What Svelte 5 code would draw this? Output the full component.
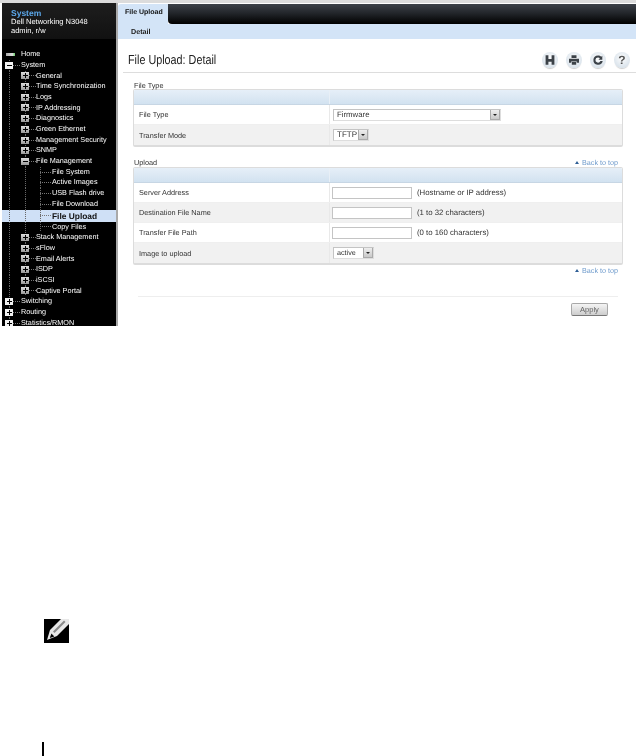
<script>
  // guides = how many ancestor lines run through the row
  const tree = [
    { label: "System", guides: [], kind: "open" },
    { label: "General", guides: [1], kind: "closed" },
    { label: "Time Synchronization", guides: [1], kind: "closed" },
    { label: "Logs", guides: [1], kind: "closed" },
    { label: "IP Addressing", guides: [1], kind: "closed" },
    { label: "Diagnostics", guides: [1], kind: "closed" },
    { label: "Green Ethernet", guides: [1], kind: "closed" },
    { label: "Management Security", guides: [1], kind: "closed" },
    { label: "SNMP", guides: [1], kind: "closed" },
    { label: "File Management", guides: [1], kind: "open" },
    { label: "File System", guides: [1, 1], kind: "leaf" },
    { label: "Active Images", guides: [1, 1], kind: "leaf" },
    { label: "USB Flash drive", guides: [1, 1], kind: "leaf" },
    { label: "File Download", guides: [1, 1], kind: "leaf" },
    { label: "File Upload", guides: [1, 1], kind: "leaf", active: true },
    { label: "Copy Files", guides: [1, 1], kind: "leaf" },
    { label: "Stack Management", guides: [1], kind: "closed" },
    { label: "sFlow", guides: [1], kind: "closed" },
    { label: "Email Alerts", guides: [1], kind: "closed" },
    { label: "ISDP", guides: [1], kind: "closed" },
    { label: "iSCSI", guides: [1], kind: "closed" },
    { label: "Captive Portal", guides: [1], kind: "closed" },
    { label: "Switching", guides: [], kind: "closed" },
    { label: "Routing", guides: [], kind: "closed" },
    { label: "Statistics/RMON", guides: [], kind: "closed" }
  ];

  const uploadRows = [
    { label: "Server Address", hint: "(Hostname or IP address)" },
    { label: "Destination File Name", hint: "(1 to 32 characters)" },
    { label: "Transfer File Path", hint: "(0 to 160 characters)" }
  ];
</script>

<div class="shot">
  <aside class="sidebar">
    <header class="brand">
      <div class="brand-title">System</div>
      <div>Dell Networking N3048</div>
      <div>admin, r/w</div>
    </header>
    <nav class="tree">
      <div class="row home">
        <span class="home-icon"></span>
        <span class="label">Home</span>
      </div>
      {#each tree as item}
        <div class="row" class:active={item.active}>
          {#each item.guides as _}
            <span class="guide"></span>
          {/each}
          {#if item.kind === "leaf"}
            <span class="leaf"></span>
          {:else}
            <span class="slot">
              <span class="box" class:top={item.guides.length === 0}>
                <i class="h"></i>
                {#if item.kind === "closed"}<i class="v"></i>{/if}
              </span>
              <span class="dash"></span>
            </span>
          {/if}
          <span class="label">{item.label}</span>
        </div>
      {/each}
    </nav>
  </aside>

  <main class="content">
    <div class="tabs">
      <div class="tab">File Upload</div>
      <div class="tabs-fill"></div>
    </div>
    <div class="subbar">Detail</div>

    <div class="title-row">
      <h1>File Upload: Detail</h1>
      <div class="actions">
        <span class="round">
          <svg viewBox="0 0 16 16"><path d="M3.6 3.2h2.8v3.8h3.2V3.2h2.8v9.6H9.6V9.8H6.4v3H3.6z" /></svg>
        </span>
        <span class="round">
          <svg viewBox="0 0 16 16"><path d="M5.5 3.2h5v2.8h-5zM3 6.8h10v4h-2.2V9.4H5.2v1.4H3zM5.8 10h4.4v2.8H5.8z" /></svg>
        </span>
        <span class="round">
          <svg viewBox="0 0 16 16"><path d="M8 3.4c1.3 0 2.5.5 3.3 1.4l1-1v3.9H8.5l1.4-1.4c-.5-.5-1.2-.8-1.9-.8a2.6 2.6 0 1 0 2.4 3.6h2.3A4.7 4.7 0 1 1 8 3.4z" /></svg>
        </span>
        <span class="round help">?</span>
      </div>
    </div>

    <section class="block first">
      <div class="block-head"><span>File Type</span></div>
      <div class="panel">
        <div class="cells head"><div></div><div></div></div>
        <div class="cells">
          <div class="name">File Type</div>
          <div class="value">
            <span class="select wide">Firmware<b class="arrow"></b></span>
          </div>
        </div>
        <div class="cells alt">
          <div class="name">Transfer Mode</div>
          <div class="value">
            <span class="select narrow">TFTP<b class="arrow"></b></span>
          </div>
        </div>
      </div>
    </section>

    <section class="block">
      <div class="block-head">
        <span>Upload</span>
        <a class="top-link" href="#top"><i></i>Back to top</a>
      </div>
      <div class="panel">
        <div class="cells head"><div></div><div></div></div>
        {#each uploadRows as row, i}
          <div class="cells" class:alt={i % 2 === 1}>
            <div class="name">{row.label}</div>
            <div class="value">
              <input type="text" />
              <span class="hint">{row.hint}</span>
            </div>
          </div>
        {/each}
        <div class="cells alt">
          <div class="name">Image to upload</div>
          <div class="value">
            <span class="select small">active<b class="arrow"></b></span>
          </div>
        </div>
      </div>
      <div class="link-row">
        <a class="top-link" href="#top"><i></i>Back to top</a>
      </div>
    </section>

    <div class="footer">
      <button type="button">Apply</button>
    </div>
  </main>
</div>

<div class="note-icon">
  <svg viewBox="0 0 25 24">
    <rect width="25" height="24" fill="#000" />
    <path d="M3 21l3-10L17 0h8v5L13 17z" fill="#e8e8e8" />
    <path d="M20 1.5l1.5 1.5L10.5 14l-1.5-1.5z" fill="#8a8a8a" />
    <path d="M5.8 19l1.6-4.4 3 2.8z" fill="#000" />
  </svg>
</div>
<div class="change-bar"></div>

<style>
  :global(body) {
    background: #fff;
    font-family: "Liberation Sans", Arial, sans-serif;
    text-rendering: geometricPrecision;
  }

  /* the reference is a scaled-down capture, so everything is slightly soft */
  .shot {
    display: flex;
    width: 636px;
    height: 326px;
    padding-left: 2px;
    box-sizing: border-box;
    overflow: hidden;
    background: #fff;
    border-top: 3px solid #dcdcdc;
    filter: blur(0.3px);
  }

  .sidebar {
    width: 114px;
    flex: none;
    background: #000;
    color: #fff;
    font-size: 7.5px;
  }

  .brand {
    height: 36px;
    padding: 5px 0 0 9px;
    box-sizing: border-box;
    background: linear-gradient(#1e1e1e, #111);
    line-height: 8.6px;
  }

  .brand-title {
    color: #5ba6e8;
    font-weight: bold;
    font-size: 8.5px;
    line-height: 10px;
  }

  .tree {
    padding-top: 10.2px;
    font-size: 7.25px;
  }

  .row {
    display: flex;
    align-items: stretch;
    height: 10.7px;
    padding-left: 3px;
    line-height: 10.7px;
    white-space: nowrap;
  }

  .row.active {
    height: 12px;
    line-height: 12px;
    background: #cfe0f6;
    color: #111;
    font-weight: bold;
    font-size: 8.4px;
  }

  .row.home {
    align-items: center;
    padding-left: 4px;
  }

  .home-icon {
    width: 9px;
    height: 3px;
    margin-right: 6px;
    background: linear-gradient(90deg, #aaa, #ddd 70%, #6c6);
  }

  .guide {
    width: 16px;
    flex: none;
    background: linear-gradient(#666 50%, transparent 50%) 4px 0 / 1px 2px repeat-y;
  }

  .row .guide + .slot {
    margin-right: -1px;
  }

  .slot {
    width: 16px;
    flex: none;
    display: flex;
    align-items: center;
    background: linear-gradient(#666 50%, transparent 50%) 4px 0 / 1px 2px repeat-y;
  }

  .box {
    position: relative;
    width: 8px;
    height: 7px;
    background: linear-gradient(#ddd, #999);
  }

  .box.top {
    background: #f2f2f2;
  }

  .box .h {
    position: absolute;
    left: 1.5px;
    top: 3px;
    width: 5px;
    height: 1px;
    background: #000;
  }

  .box .v {
    position: absolute;
    left: 3.5px;
    top: 1px;
    width: 1px;
    height: 5px;
    background: #000;
  }

  .dash {
    width: 7px;
    height: 1px;
    background: repeating-linear-gradient(90deg, #777 0 1px, transparent 1px 2px);
  }

  .leaf {
    width: 16px;
    flex: none;
    margin-left: -1px;
    background:
      linear-gradient(#666 50%, transparent 50%) 4px 0 / 1px 2px repeat-y,
      repeating-linear-gradient(90deg, #777 0 1px, transparent 1px 2px) 4px 50% / 11px 1px no-repeat;
  }

  .content {
    flex: 1;
    min-width: 0;
    color: #333;
    font-size: 7.3px;
    border-left: 2px solid #a9a9a9;
  }

  .tabs {
    display: flex;
    height: 20px;
    margin-top: 1px;
  }

  .tab {
    width: 50px;
    box-sizing: border-box;
    padding: 5px 0 0 7px;
    background: #d3e4f7;
    color: #111;
    font-weight: bold;
    font-size: 7px;
    border-radius: 3px 0 0 0;
  }

  .tabs-fill {
    flex: 1;
    background: linear-gradient(#3c4148, #23262b 45%, #000);
    border-radius: 0 0 0 4px;
  }

  .subbar {
    height: 15px;
    padding: 3px 0 0 13px;
    box-sizing: border-box;
    background: #d3e4f7;
    color: #222;
    font-weight: bold;
    font-size: 7.2px;
  }

  .title-row {
    display: flex;
    align-items: center;
    justify-content: space-between;
    height: 34px;
    box-sizing: border-box;
    margin-left: 5px;
    padding: 8px 6px 0 5px;
    border-bottom: 1px solid #ddd;
  }

  h1 {
    margin: 0;
    font-weight: normal;
    font-size: 10.8px;
    transform-origin: left center;
    transform: scaleY(1.2);
    color: #222;
  }

  .actions {
    display: flex;
    gap: 8px;
  }

  .round {
    display: flex;
    align-items: center;
    justify-content: center;
    width: 16px;
    height: 16px;
    border-radius: 50%;
    background: radial-gradient(circle at 50% 40%, #fdfdfd, #dbe4ec 70%, #b6c2cd);
    box-shadow: 0 2px 1px -1px #ccc;
  }

  .round svg {
    width: 16px;
    height: 16px;
    fill: #3c4248;
  }

  .help {
    color: #555;
    font-weight: bold;
    font-size: 12px;
  }

  .block {
    margin: 0 13px 0 15px;
  }

  .block.first {
    margin-top: 8px;
    margin-bottom: 11px;
  }

  .block.first .block-head {
    margin-bottom: -1px;
  }

  .block-head {
    display: flex;
    justify-content: space-between;
    align-items: center;
    height: 9px;
    padding: 0 5px 0 1px;
  }

  .panel {
    border: 1px solid #dcdcdc;
    border-bottom-width: 2px;
    border-radius: 2px;
    overflow: hidden;
  }

  .cells {
    display: grid;
    grid-template-columns: 195px 1fr;
    height: 20px;
    align-items: center;
    border-bottom: 1px solid #efefef;
    box-sizing: border-box;
  }

  .cells:last-child {
    border-bottom: 0;
  }

  .cells.head {
    height: 15px;
    background: linear-gradient(#e6eff8, #d2e2f0);
    border-bottom: 1px solid #c7d6e4;
  }

  .cells.head > div {
    height: 100%;
  }

  .cells.head > div + div {
    border-left: 1px solid #e8eff6;
  }

  .cells.alt {
    background: #f1f1f1;
  }

  .name {
    padding-left: 5px;
  }

  .value {
    display: flex;
    align-items: center;
    gap: 5px;
    height: 100%;
    padding-left: 3px;
    border-left: 1px solid #e9e9e9;
  }

  .select {
    position: relative;
    display: block;
    height: 12px;
    box-sizing: border-box;
    padding-left: 3px;
    background: #fff;
    border: 1px solid #c4c4c4;
    border-bottom-color: #ddd;
    border-right-color: #ddd;
    color: #333;
    font-size: 7.8px;
    line-height: 10px;
  }

  .select.wide {
    width: 168px;
  }

  .select.narrow {
    width: 36px;
    font-size: 8px;
  }

  .select.small {
    width: 41px;
    font-size: 7.2px;
  }

  .arrow {
    position: absolute;
    right: 0;
    top: 0;
    bottom: 0;
    width: 10px;
    background: linear-gradient(#eee, #c9c9c9);
    border: 1px solid #aaa;
    border-width: 0 1px 1px 1px;
    box-sizing: border-box;
  }

  .arrow::after {
    content: "";
    position: absolute;
    left: 2px;
    top: 4px;
    border: 2px solid transparent;
    border-top: 2px solid #222;
  }

  input {
    width: 80px;
    height: 12px;
    margin-left: -1px;
    padding: 0;
    box-sizing: border-box;
    background: #fff;
    border: 1px solid #c4c4c4;
    border-radius: 0;
  }

  .hint {
    font-size: 7.8px;
    color: #333;
  }

  .top-link {
    display: inline-flex;
    align-items: center;
    gap: 3px;
    color: #6f9bcc;
    font-size: 7.2px;
    text-decoration: none;
  }

  .top-link i {
    border: 2px solid transparent;
    border-top: 0;
    border-bottom: 3px solid #2f5f96;
  }

  .link-row {
    display: flex;
    justify-content: flex-end;
    padding: 1px 5px 0 0;
  }

  .footer {
    display: flex;
    justify-content: flex-end;
    margin: 21px 18px 0 20px;
    padding: 6px 10px 0 0;
    border-top: 1px solid #eee;
  }

  button {
    width: 37px;
    height: 13px;
    padding: 0;
    background: linear-gradient(#f4f4f4, #cdcdcd);
    border: 1px solid #a8a8a8;
    border-bottom-color: #777;
    border-radius: 2px;
    color: #666;
    font-family: inherit;
    font-size: 7.5px;
    line-height: 10px;
  }

  .note-icon {
    width: 25px;
    height: 24px;
    margin: 293px 0 0 44px;
  }

  .note-icon svg {
    display: block;
    width: 25px;
    height: 24px;
  }

  .change-bar {
    width: 2px;
    height: 14px;
    margin: 99px 0 0 42px;
    background: #000;
  }
</style>
